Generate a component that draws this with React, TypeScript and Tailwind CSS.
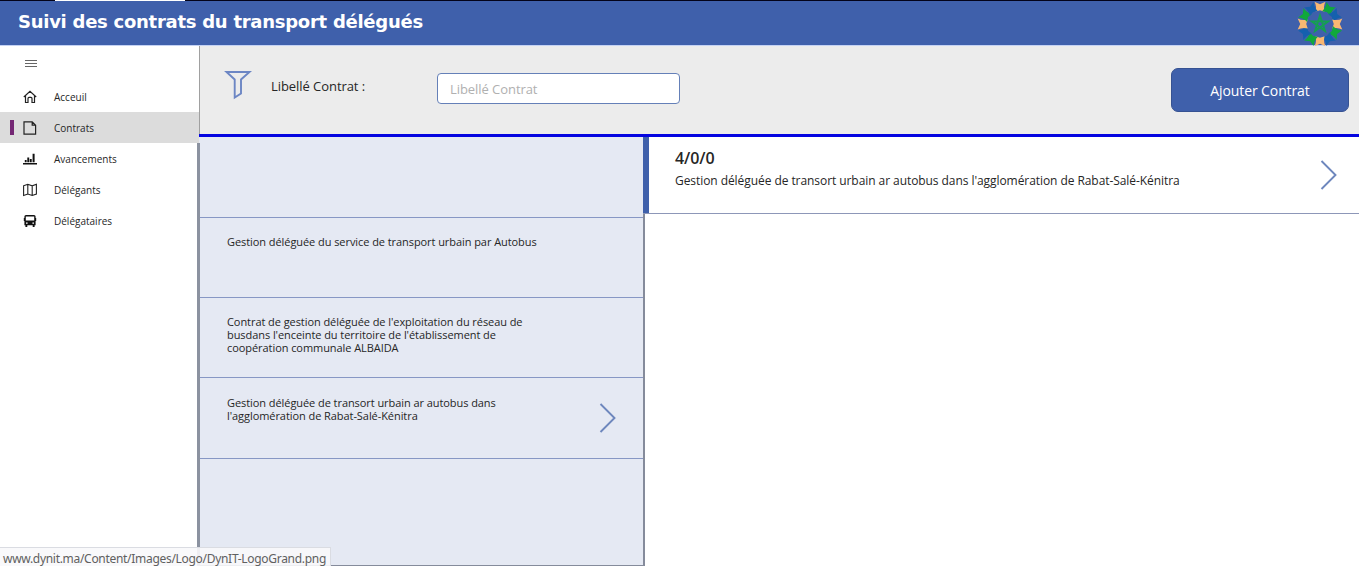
import React from "react";

const contracts = [
  { lines: [] as string[], h: "h-[81px]", arrow: false },
  { lines: ["Gestion déléguée du service de transport urbain par Autobus"], h: "h-[80px]", arrow: false },
  {
    lines: [
      "Contrat de gestion déléguée de l'exploitation du réseau de",
      "busdans l'enceinte du territoire de l'établissement de",
      "coopération communale ALBAIDA",
    ],
    h: "h-[80px]",
    arrow: false,
  },
  {
    lines: ["Gestion déléguée de transort urbain ar autobus dans", "l'agglomération de Rabat-Salé-Kénitra"],
    h: "h-[81px]",
    arrow: true,
  },
];

function Chevron() {
  return (
    <svg width="18" height="32" viewBox="0 0 18 32" fill="none" stroke="#6e87bd" strokeWidth="1.9">
      <path d="M1.5 2 L15.5 16 L1.5 30" />
    </svg>
  );
}

function HomeIcon() {
  return (
    <svg width="14" height="14" viewBox="0 0 14 14" fill="none" stroke="#222" strokeWidth="1.2">
      <path d="M.8 7 L7 1.300 L13.200 7 M2.500 5.800 V12.500 H5 V8.400 Q5 7.400 6 7.400 H8 Q9 7.400 9 8.400 V12.500 H11.500 V5.800" />
    </svg>
  );
}

function PageIcon() {
  return (
    <svg width="14" height="14" viewBox="0 0 14 14" fill="none" stroke="#222" strokeWidth="1.2">
      <path d="M1 .8 H9.200 L12.600 4.200 V13.200 H1 Z M9.200 .8 V4.200 H12.600" />
    </svg>
  );
}

function ChartIcon() {
  return (
    <svg width="14" height="14" viewBox="0 0 14 14" fill="#111">
      <path d="M0 11h14v1.500H0zM1.800 8h1.800v2.200H1.800zM4.300 5.500h1.900v4.700H4.300zM6.800 7h1.900v3.200H6.800zM9.600 1.800h2v8.400h-2z" />
    </svg>
  );
}

function MapIcon() {
  return (
    <svg width="14" height="14" viewBox="0 0 14 14" fill="none" stroke="#222" strokeWidth="1.1">
      <path d="M.6 2.800 L4.800 1.300 L9.200 2.800 L13.400 1.300 V11 L9.200 12.500 L4.800 11 L.6 12.500 Z M4.800 1.300 V11 M9.200 2.800 V12.500" />
    </svg>
  );
}

function BusIcon() {
  return (
    <svg width="14" height="14" viewBox="0 0 14 14">
      <path
        fill="#111"
        fillRule="evenodd"
        d="M3 1h8q1.600 0 1.600 1.600V4h.6v3h-.6v4.200h-1V13H9.700v-1.800H4.300V13H2.400v-1.800h-1V7H.8V4h.6V2.600Q1.400 1 3 1zM2.800 2.600v4h8.400v-4zM3 8.500v1.200h1.600V8.500zM9.400 8.500v1.200H11V8.500z"
      />
    </svg>
  );
}

const nav = [
  { label: "Acceuil", Icon: HomeIcon, active: false },
  { label: "Contrats", Icon: PageIcon, active: true },
  { label: "Avancements", Icon: ChartIcon, active: false },
  { label: "Délégants", Icon: MapIcon, active: false },
  { label: "Délégataires", Icon: BusIcon, active: false },
];

const petals = ["#f9b872", "#10a83c", "#1560ae", "#f9b872", "#10a83c", "#1560ae", "#f9b872", "#10a83c", "#1560ae", "#f9b872", "#10a83c", "#1560ae"];

function Logo() {
  return (
    <svg width="46" height="45" viewBox="-23 -23 46 45">
      {petals.map((c, i) => (
        <path
          key={i}
          fill={c}
          transform={`rotate(${i * 30})`}
          d="M-5.500 -22.300 L0 -19.800 L5.500 -22.300 Q3 -17.500 4.600 -12.200 L0 -13.800 L-4.600 -12.200 Q-3 -17.500 -5.500 -22.300Z"
        />
      ))}
      <path fill="none" stroke="#14a050" strokeWidth="1.9" d="M0 -8.500 L5 6.900 L-8.100 -2.600 H8.100 L-5 6.900 Z" />
    </svg>
  );
}

export default function App() {
  return (
    <div className="relative flex h-[566px] w-[1359px] flex-col overflow-hidden bg-white font-['Open_Sans',sans-serif] text-[#262626]">
      <div className="flex h-px shrink-0 bg-[#03031a] pl-[55px]">
        <div className="w-[130px] bg-white" />
      </div>
      <header className="flex h-[45px] shrink-0 items-start justify-between border-b border-[#c4d2f4] bg-[#3f60ab] pl-[18px] pr-[16px]">
        <h1 className="whitespace-nowrap pt-[8px] font-['DejaVu_Sans',sans-serif] text-[18px] font-bold leading-[26px] tracking-[-0.265px] text-white">
          Suivi des contrats du transport délégués
        </h1>
        <Logo />
      </header>
      <div className="flex min-h-0 flex-1">
        <nav className="flex w-[199px] shrink-0 flex-col">
          <div className="h-[35px] pl-[25px] pt-[13px]">
            <svg width="12" height="9" viewBox="0 0 12 9">
              <path d="M0 1.500H12M0 4.500H12M0 7.500H12" stroke="#666" />
            </svg>
          </div>
          {nav.map(({ label, Icon, active }) => (
            <div key={label} className={active ? "flex h-[31px] items-center bg-[#dcdcdc]" : "flex h-[31px] items-center"}>
              <div className={active ? "ml-[10px] h-[15px] w-[4px] bg-[#742774]" : "ml-[10px] h-[15px] w-[4px]"} />
              <div className="ml-[9px] w-[31px]">
                <Icon />
              </div>
              <span className="text-[10px] leading-[14px]">{label}</span>
            </div>
          ))}
        </nav>
        <main className="flex flex-1 flex-col">
          <section className="flex h-[88px] shrink-0 items-start border-l border-[#a0a0a0] bg-[#ececec]">
            <svg className="ml-[24px] mt-[24px] shrink-0" width="28" height="30" viewBox="0 0 28 30" fill="none" stroke="#6c86c4" strokeWidth="1.900">
              <path d="M2.500 2 H25.500 L17 9.500 V23.500 L10.700 27.500 V9.500 Z" />
            </svg>
            <label className="ml-[19px] mt-[30px] w-[166px] text-[13px] leading-[20px] tracking-[-0.06px]">Libellé Contrat :</label>
            <input
              placeholder="Libellé Contrat"
              className="mt-[27px] h-[31px] w-[243px] rounded-[4px] border border-[#6580b8] bg-white pl-[12px] pr-[11px] text-[13px] tracking-[-0.06px] placeholder:text-[#b0b0b0]"
            />
            <button className="ml-auto mr-[10px] mt-[22px] h-[44px] w-[178px] rounded-[7px] border border-[#365292] bg-[#3f60ab] text-[14px] tracking-[-0.1px] text-white">
              Ajouter Contrat
            </button>
          </section>
          <div className="h-[3px] shrink-0 bg-[#0404e0]" />
          <div className="flex min-h-0 flex-1">
            <div className="w-[446px] shrink-0 border-b border-r-2 border-[#858b9b] bg-[#e5e9f3] pl-px">
              {contracts.map((c, i) => (
                <div key={i} className={`${c.h} flex items-start justify-between border-b border-[#8797c4] pl-[27px] pr-[26px]`}>
                  <div
                    className={
                      i === 3
                        ? "whitespace-nowrap pt-[18px] text-[11px] leading-[13px] tracking-[-0.065px]"
                        : "whitespace-nowrap pt-[17px] text-[11px] leading-[13px] tracking-[-0.065px]"
                    }
                  >
                    {c.lines.map((l) => (
                      <p key={l}>{l}</p>
                    ))}
                  </div>
                  {c.arrow && (
                    <div className="pt-[24px]">
                      <Chevron />
                    </div>
                  )}
                </div>
              ))}
            </div>
            <div className="flex-1">
              <article className="-ml-[2px] flex h-[77px] items-start justify-between border-b border-[#8d97b8] pr-[21px]">
                <div className="flex">
                  <div className="h-[76px] w-[6px] bg-[#3f60ab]" />
                  <div className="whitespace-nowrap pl-[26px] pt-[11px]">
                    <h2 className="text-[16px] font-semibold leading-[20px] tracking-[-0.1px]">4/0/0</h2>
                    <p className="mt-[5px] text-[12px] leading-[16px] tracking-[-0.066px]">
                      Gestion déléguée de transort urbain ar autobus dans l'agglomération de Rabat-Salé-Kénitra
                    </p>
                  </div>
                </div>
                <div className="pt-[22px]">
                  <Chevron />
                </div>
              </article>
            </div>
          </div>
        </main>
      </div>
      <div className="absolute left-[197px] top-[143px] h-[423px] w-[3px] bg-[#8b92a0]" />
      <div className="absolute bottom-0 left-0 h-[19px] w-[331px] whitespace-nowrap border-r border-t border-[#dadce2] bg-[#f8f8fb]/90 pl-[3px] pt-[2px] font-['Noto_Sans',sans-serif] text-[12px] leading-[18px] tracking-[-0.3px] text-[#606060]">
        www.dynit.ma/Content/Images/Logo/DynIT-LogoGrand.png
      </div>
    </div>
  );
}
